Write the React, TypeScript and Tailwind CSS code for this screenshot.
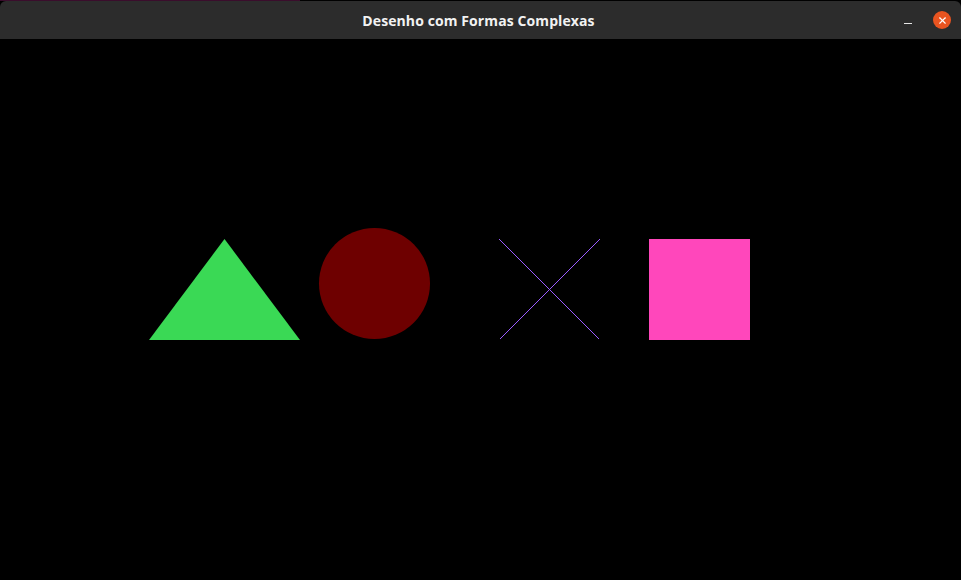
import { X } from 'lucide-react';

export default function App() {
  return (
    <div className="flex h-[580px] w-[961px] flex-col overflow-hidden bg-black font-['Open_Sans',sans-serif]">
      <div className="h-px w-[300px] bg-[#3a0d2c]" />
      <div className="relative flex h-[38px] items-center justify-center rounded-t-[6px] bg-[#2c2c2c]">
        <span className="mr-[4px] text-[14px] font-bold tracking-[0.1px] text-[#f2f2f2]">
          Desenho com Formas Complexas
        </span>
        <div className="absolute right-[10px] top-[10px] flex items-center gap-[21px]">
          <div className="mt-[7px] h-px w-[8px] bg-[#e6e6e6]" />
          <div className="flex h-[18px] w-[18px] items-center justify-center rounded-full bg-[#e95420] text-white">
            <X size={11} strokeWidth={2.5} />
          </div>
        </div>
      </div>
      <svg width="961" height="541" className="block" shapeRendering="crispEdges">
        <polygon points="224.5,200 149,301 300,301" fill="#3ad955" shapeRendering="auto" />
        <circle cx="374.5" cy="244.5" r="55.5" fill="#6e0000" shapeRendering="auto" />
        <line x1="499.5" y1="200.5" x2="599.5" y2="300.5" stroke="#9a5cff" strokeWidth="1" />
        <line x1="599.5" y1="200.5" x2="499.5" y2="300.5" stroke="#9a5cff" strokeWidth="1" />
        <rect x="649" y="200" width="101" height="101" fill="#ff47bb" />
      </svg>
    </div>
  );
}
